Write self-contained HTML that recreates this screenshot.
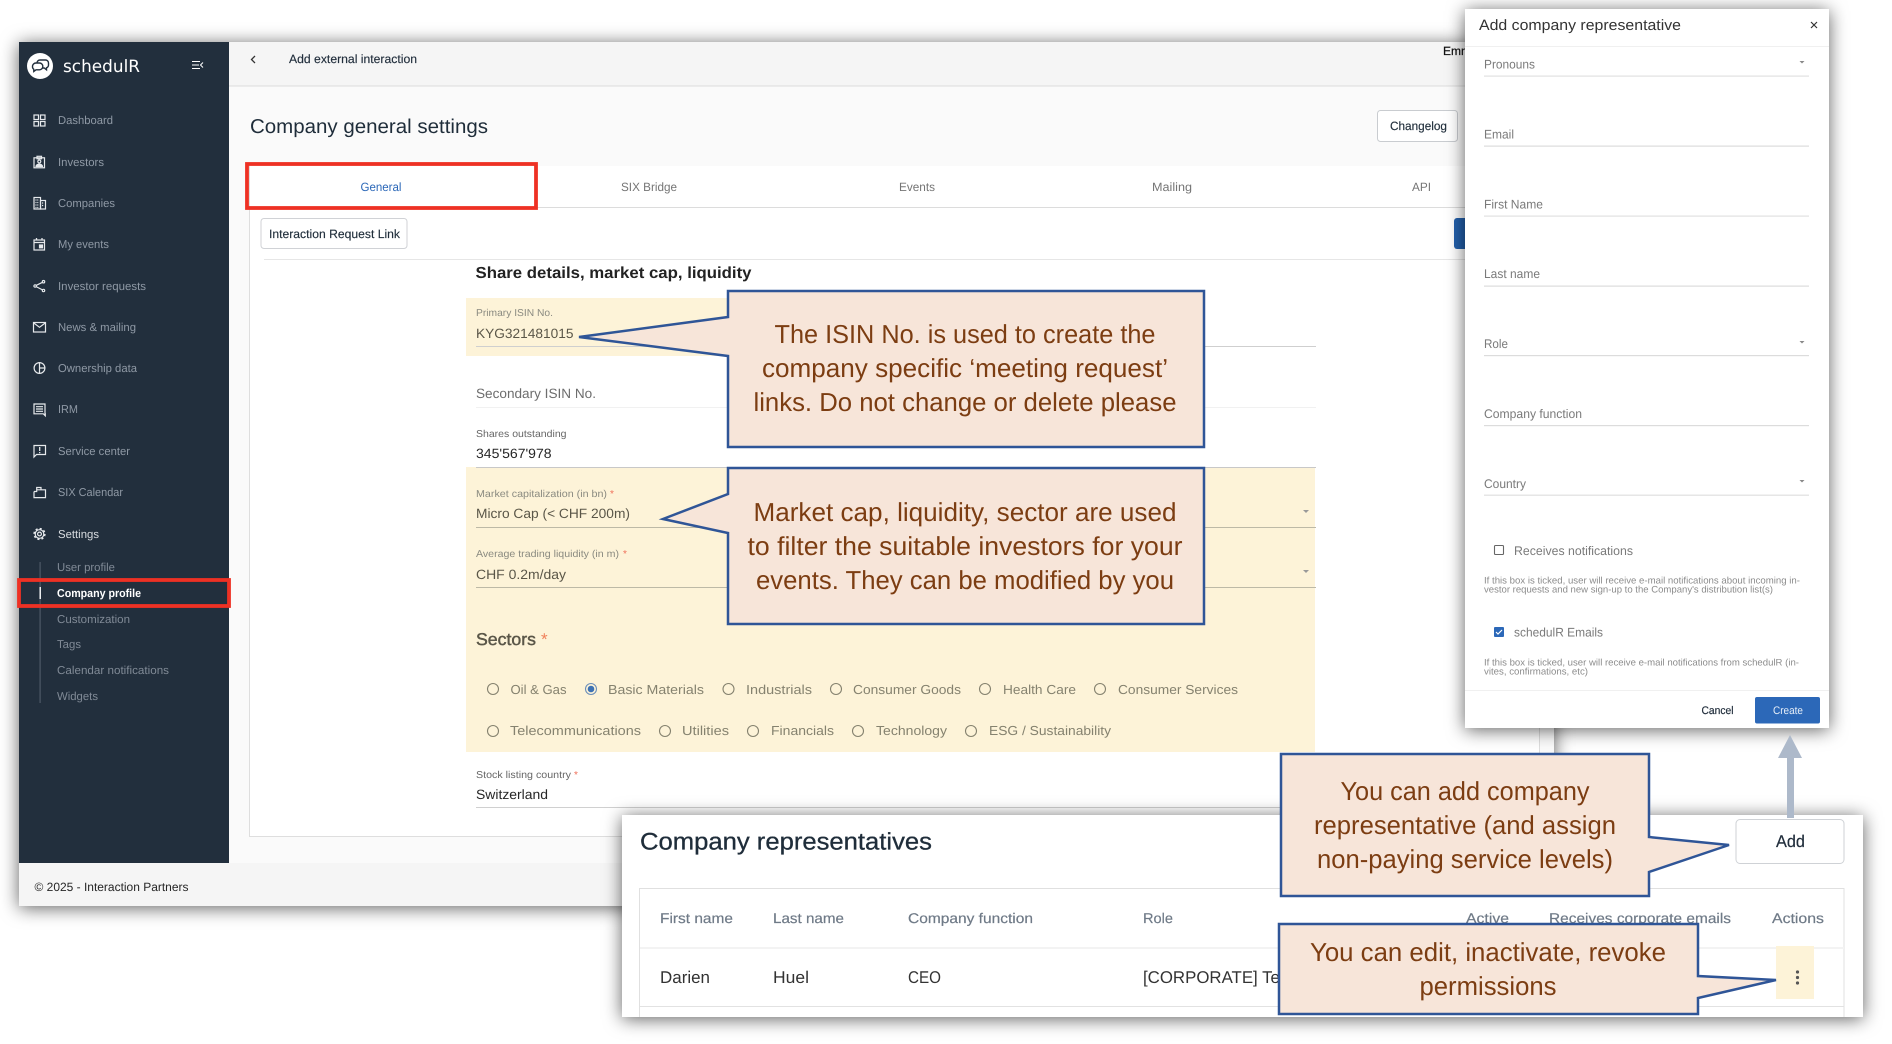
<!DOCTYPE html>
<html lang="en"><head><meta charset="utf-8"><title>Company general settings</title>
<style>
html,body{margin:0;padding:0;background:#fff;width:1892px;height:1044px;overflow:hidden}
svg{display:block;font-family:"Liberation Sans",Arial,sans-serif}
text{text-rendering:geometricPrecision}
.nav{font-size:11.5px;fill:#8f99a5}
.sub{font-size:11.5px;fill:#808a96}
.ic{fill:none;stroke:#e6e9ec;stroke-width:1.2}
.lab{font-size:12.5px;fill:#7a7a7a}
.tab{font-size:12px;fill:#757575}
.sm{font-size:10px;fill:#8a8a80}
.val{font-size:13.5px;fill:#5a5648}
.rad{font-size:13px;fill:#85826f}
.hlp{font-size:9.5px;fill:#8c8c8c}
.th{font-size:14px;fill:#6f7a87;stroke:#6f7a87;stroke-width:.2}
.td{font-size:17px;fill:#333}
.co{font-size:26px;fill:#7c3d12;text-anchor:middle}
.cb{fill:#f7e5d9;stroke:#2f5597;stroke-width:2.5}
.rc{fill:none;stroke:#85826f;stroke-width:1.1}
</style></head><body>
<svg width="1892" height="1044" viewBox="0 0 1892 1044" xmlns="http://www.w3.org/2000/svg">
<rect width="1892" height="1044" fill="#fff"/>

<!-- main window -->
<rect x="19" y="42" width="1535" height="864" fill="#fafafa" style="filter:drop-shadow(0 2px 9px rgba(0,0,0,.62))"/>
<rect x="19" y="863" width="1535" height="43" fill="#f5f5f5"/>
<rect x="229" y="42" width="1325" height="44" fill="#f5f5f5"/>
<rect x="229" y="85.5" width="1325" height="1" fill="#dcdcdc"/>

<!-- sidebar -->
<rect x="19" y="42" width="210" height="821" fill="#222f3d"/>
<circle cx="40" cy="66" r="13" fill="#fff"/>
<g fill="#fff" stroke="#222f3d" stroke-width="1.400">
<path d="M40 60h5.500a3 3 0 0 1 3 3v2a3 3 0 0 1-2 2.800v2l-2.300-1.800H40a3 3 0 0 1-3-3v-2a3 3 0 0 1 3-3z"/>
<path d="M36 63h3.500a3.300 3.300 0 0 1 3.300 3.400a3.300 3.300 0 0 1-3.300 3.400H36l-2.200 1.700v-2.200a3.400 3.400 0 0 1-1.300-2.900a3.400 3.400 0 0 1 3.500-3.400z"/>
</g>
<text x="63" y="72" font-family="DejaVu Sans,sans-serif" font-size="17" fill="#fff" textLength="77" lengthAdjust="spacingAndGlyphs">schedulR</text>
<path d="M192 61.500h8M192 65h7M192 68.500h8M203 62.500l-2.500 2.500 2.500 2.500" fill="none" stroke="#fff" stroke-width="1"/>

<g class="ic">
<g transform="translate(33.500,114.500)"><rect x=".5" y=".5" width="4.500" height="4.500"/><rect x="7" y=".5" width="4.500" height="4.500"/><rect x=".5" y="7" width="4.500" height="4.500"/><rect x="7" y="7" width="4.500" height="4.500"/></g>
<g transform="translate(33.500,156)"><rect x=".5" y="1.800" width="10.500" height="10"/><rect x="3.500" y=".3" width="4.500" height="2.500"/><circle cx="5.800" cy="5.500" r="1.500"/><path d="M2.500 10.500c0-3 6.500-3 6.500 0z" fill="#e6e9ec"/></g>
<g transform="translate(33.500,197)"><rect x=".5" y=".5" width="6.500" height="11.500"/><rect x="7" y="3.500" width="5" height="8.500"/><path d="M2 3h3.500M2 5.500h3.500M2 8h3.500M2 10.500h3.500M8.500 6h2M8.500 8.500h2" stroke-dasharray="1 .8"/></g>
<g transform="translate(33.500,238)"><rect x=".5" y="2" width="10.500" height="10"/><path d="M3 0v2M8.500 0v2M.5 4.500h10.500" stroke-width="1.300"/><rect x="6" y="7" width="3" height="2.800" fill="#e6e9ec"/></g>
<g transform="translate(33.500,280)"><circle cx="10" cy="1.700" r="1.200"/><circle cx="1.600" cy="6" r="1.200"/><circle cx="10" cy="10.500" r="1.200"/><path d="M9 2.300L2.600 5.400M2.600 6.600L9 9.900" stroke-width="1.200"/></g>
<g transform="translate(33,321)"><rect x=".5" y="1.500" width="12" height="9.500"/><path d="M.8 2l5.700 4.300L12.200 2"/></g>
<g transform="translate(33.500,362)"><circle cx="6" cy="6" r="5.400"/><path d="M6 .6v10.800M6 6h5.400"/></g>
<g transform="translate(33.500,403.500)"><path d="M.5.500h11v9.800h.3v2l-2-2H.5z"/><path d="M2.500 3.200h7M2.500 5.500h7M2.500 7.800h7"/></g>
<g transform="translate(33.500,445)"><path d="M.5.500h11.500v9H3L.5 12z"/><path d="M6.200 2v4M6.200 7v1.300" stroke-width="1.300"/></g>
<g transform="translate(33.500,486)"><path d="M.5 5.500h2.700V1.500H7.500V3.800H3.200M3.200 3.800v1.700M3.200 3.800H12v7.800H.5V5.500"/></g>
<g transform="translate(39.500,534)"><circle r="1.900"/><circle r="4.300"/><circle r="5.400" stroke-width="1.500" stroke-dasharray="2.100 2.140"/></g>
</g>

<text class="nav" x="58" y="124" textLength="55" lengthAdjust="spacingAndGlyphs">Dashboard</text>
<text class="nav" x="58" y="166" textLength="46" lengthAdjust="spacingAndGlyphs">Investors</text>
<text class="nav" x="58" y="207" textLength="57" lengthAdjust="spacingAndGlyphs">Companies</text>
<text class="nav" x="58" y="248" textLength="51" lengthAdjust="spacingAndGlyphs">My events</text>
<text class="nav" x="58" y="290" textLength="88" lengthAdjust="spacingAndGlyphs">Investor requests</text>
<text class="nav" x="58" y="331" textLength="78" lengthAdjust="spacingAndGlyphs">News &amp; mailing</text>
<text class="nav" x="58" y="372" textLength="79" lengthAdjust="spacingAndGlyphs">Ownership data</text>
<text class="nav" x="58" y="413" textLength="20" lengthAdjust="spacingAndGlyphs">IRM</text>
<text class="nav" x="58" y="455" textLength="72" lengthAdjust="spacingAndGlyphs">Service center</text>
<text class="nav" x="58" y="496" textLength="65" lengthAdjust="spacingAndGlyphs">SIX Calendar</text>
<text class="nav" x="58" y="538" textLength="41" lengthAdjust="spacingAndGlyphs" style="fill:#d8dce0">Settings</text>

<rect x="39.500" y="562" width="1.200" height="141" fill="#4d5866"/>
<rect x="39.500" y="587" width="1.400" height="12" fill="#fff"/>
<text class="sub" x="57" y="571" textLength="58" lengthAdjust="spacingAndGlyphs">User profile</text>
<text x="57" y="597" font-size="11.500" font-weight="700" fill="#fff" textLength="84" lengthAdjust="spacingAndGlyphs">Company profile</text>
<text class="sub" x="57" y="623" textLength="73" lengthAdjust="spacingAndGlyphs">Customization</text>
<text class="sub" x="57" y="648" textLength="24" lengthAdjust="spacingAndGlyphs">Tags</text>
<text class="sub" x="57" y="674" textLength="112" lengthAdjust="spacingAndGlyphs">Calendar notifications</text>
<text class="sub" x="57" y="700" textLength="41" lengthAdjust="spacingAndGlyphs">Widgets</text>
<rect x="19" y="580" width="210" height="26" fill="none" stroke="#ee3124" stroke-width="3.800"/>

<text x="34.500" y="891" font-size="12" fill="#262626" textLength="154" lengthAdjust="spacingAndGlyphs">© 2025 - Interaction Partners</text>

<!-- top bar -->
<path d="M255 56l-3.500 3.500 3.500 3.500" fill="none" stroke="#333" stroke-width="1.300"/>
<text x="289" y="63" font-size="12" fill="#222f3d" stroke="#222f3d" stroke-width=".15" textLength="128" lengthAdjust="spacingAndGlyphs">Add external interaction</text>
<text x="1443" y="55" font-size="12" fill="#111" stroke="#111" stroke-width=".2">Emma</text>

<!-- page heading -->
<text x="250" y="133" font-size="20" fill="#1f2d3a" textLength="238" lengthAdjust="spacingAndGlyphs">Company general settings</text>
<rect x="1377.500" y="110.500" width="80" height="31" rx="3" fill="#fff" stroke="#c9ccd0"/>
<text x="1390" y="130" font-size="12" fill="#1f2d3a" stroke="#1f2d3a" stroke-width=".15" textLength="57" lengthAdjust="spacingAndGlyphs">Changelog</text>

<!-- card -->
<rect x="249" y="166" width="1291" height="671" fill="#fff"/>
<path d="M249.500 166V836.500H1539.500V166" fill="none" stroke="#dedede"/>
<rect x="249" y="207" width="1291" height="1" fill="#dcdcdc"/>
<text x="360.500" y="191" font-size="12" fill="#2c68b8" textLength="41" lengthAdjust="spacingAndGlyphs">General</text>
<text class="tab" x="621" y="191" textLength="56" lengthAdjust="spacingAndGlyphs">SIX Bridge</text>
<text class="tab" x="899" y="191" textLength="36" lengthAdjust="spacingAndGlyphs">Events</text>
<text class="tab" x="1152" y="191" textLength="40" lengthAdjust="spacingAndGlyphs">Mailing</text>
<text class="tab" x="1412" y="191" textLength="19" lengthAdjust="spacingAndGlyphs">API</text>
<rect x="247" y="164" width="289" height="44" fill="none" stroke="#ee3124" stroke-width="3.800"/>

<rect x="261" y="218.500" width="146" height="30" rx="3" fill="#fff" stroke="#d0d2d6"/>
<text x="269" y="238" font-size="12" fill="#1f2d3a" stroke="#1f2d3a" stroke-width=".15" textLength="131" lengthAdjust="spacingAndGlyphs">Interaction Request Link</text>
<rect x="1454" y="218" width="40" height="31" rx="3" fill="#2360ac"/>
<rect x="264" y="259" width="1276" height="1" fill="#e6e6e6"/>

<text x="475.500" y="278" font-size="16" font-weight="700" fill="#222" textLength="276" lengthAdjust="spacingAndGlyphs">Share details, market cap, liquidity</text>

<!-- highlights -->
<rect x="466" y="298" width="270" height="58" fill="#fdf3d8"/>
<rect x="466" y="467" width="849" height="285" fill="#fdf3d8"/>

<!-- form -->
<text class="sm" x="476" y="316" textLength="77" lengthAdjust="spacingAndGlyphs">Primary ISIN No.</text>
<text class="val" x="476" y="338" textLength="97.500" lengthAdjust="spacingAndGlyphs">KYG321481015</text>
<rect x="476" y="346" width="840" height="1" fill="#cfcfcf"/>
<text x="476" y="398" font-size="13.500" fill="#6d6d6d" textLength="120" lengthAdjust="spacingAndGlyphs">Secondary ISIN No.</text>
<rect x="476" y="407" width="840" height="1" fill="#f1f1f1"/>
<text x="476" y="437" font-size="10" fill="#666" textLength="90.500" lengthAdjust="spacingAndGlyphs">Shares outstanding</text>
<text x="476" y="458" font-size="13.500" fill="#262626" textLength="75.600" lengthAdjust="spacingAndGlyphs">345'567'978</text>
<rect x="476" y="467" width="840" height="1" fill="#c8c8c8"/>
<text class="sm" x="476" y="497" textLength="131" lengthAdjust="spacingAndGlyphs">Market capitalization (in bn)</text>
<text x="610" y="497" font-size="10" fill="#f0705a">*</text>
<text class="val" x="476" y="518" textLength="154" lengthAdjust="spacingAndGlyphs">Micro Cap (&lt; CHF 200m)</text>
<rect x="476" y="527" width="840" height="1" fill="#bdb9a6"/>
<path d="M1308 511h6l-3 3z" fill="#999" transform="translate(-5,-1)"/>
<text class="sm" x="476" y="557" textLength="143" lengthAdjust="spacingAndGlyphs">Average trading liquidity (in m)</text>
<text x="623" y="557" font-size="10" fill="#f0705a">*</text>
<text class="val" x="476" y="579" textLength="90" lengthAdjust="spacingAndGlyphs">CHF 0.2m/day</text>
<rect x="476" y="587" width="840" height="1" fill="#bdb9a6"/>
<path d="M1308 571h6l-3 3z" fill="#999" transform="translate(-5,-1)"/>
<text x="476" y="645" font-size="17" fill="#5a5648" stroke="#5a5648" stroke-width=".45" textLength="60" lengthAdjust="spacingAndGlyphs">Sectors</text>
<text x="541" y="645" font-size="17" fill="#f0805a">*</text>

<g>
<circle class="rc" cx="493" cy="689" r="5.500"/><text class="rad" x="510.500" y="694" textLength="56" lengthAdjust="spacingAndGlyphs">Oil &amp; Gas</text>
<circle cx="591" cy="689" r="5.500" fill="none" stroke="#6d8fb8" stroke-width="1.100"/><circle cx="591" cy="689" r="3.300" fill="#3d72b4"/><text class="rad" x="608" y="694" textLength="96" lengthAdjust="spacingAndGlyphs">Basic Materials</text>
<circle class="rc" cx="728.500" cy="689" r="5.500"/><text class="rad" x="746" y="694" textLength="66" lengthAdjust="spacingAndGlyphs">Industrials</text>
<circle class="rc" cx="836" cy="689" r="5.500"/><text class="rad" x="853" y="694" textLength="108" lengthAdjust="spacingAndGlyphs">Consumer Goods</text>
<circle class="rc" cx="985" cy="689" r="5.500"/><text class="rad" x="1003" y="694" textLength="73" lengthAdjust="spacingAndGlyphs">Health Care</text>
<circle class="rc" cx="1100" cy="689" r="5.500"/><text class="rad" x="1118" y="694" textLength="120" lengthAdjust="spacingAndGlyphs">Consumer Services</text>
<circle class="rc" cx="493" cy="731" r="5.500"/><text class="rad" x="510" y="735" textLength="131" lengthAdjust="spacingAndGlyphs">Telecommunications</text>
<circle class="rc" cx="665" cy="731" r="5.500"/><text class="rad" x="682" y="735" textLength="47" lengthAdjust="spacingAndGlyphs">Utilities</text>
<circle class="rc" cx="753" cy="731" r="5.500"/><text class="rad" x="771" y="735" textLength="63" lengthAdjust="spacingAndGlyphs">Financials</text>
<circle class="rc" cx="858" cy="731" r="5.500"/><text class="rad" x="876" y="735" textLength="71" lengthAdjust="spacingAndGlyphs">Technology</text>
<circle class="rc" cx="971" cy="731" r="5.500"/><text class="rad" x="989" y="735" textLength="122" lengthAdjust="spacingAndGlyphs">ESG / Sustainability</text>
</g>
<text x="476" y="778" font-size="10" fill="#666" textLength="95" lengthAdjust="spacingAndGlyphs">Stock listing country</text>
<text x="574" y="778" font-size="10" fill="#f0705a">*</text>
<text x="476" y="799" font-size="13.500" fill="#262626" textLength="72" lengthAdjust="spacingAndGlyphs">Switzerland</text>
<rect x="476" y="807" width="840" height="1" fill="#d0d0d0"/>

<!-- modal -->
<rect x="1465" y="9" width="364" height="719" fill="#fff" style="filter:drop-shadow(0 2px 9px rgba(0,0,0,.62))"/>
<text x="1479" y="30" font-size="15" fill="#333" textLength="202" lengthAdjust="spacingAndGlyphs">Add company representative</text>
<path d="M1811 22l6 6M1817 22l-6 6" stroke="#333" stroke-width="1.200"/>
<rect x="1465" y="46" width="364" height="1" fill="#f0f0f0"/>

<text class="lab" x="1484" y="68.500" textLength="51" lengthAdjust="spacingAndGlyphs">Pronouns</text>
<rect x="1484" y="75.500" width="325" height="1.200" fill="#e2e2e2"/>
<path d="M1799.500 61h5l-2.500 2.500z" fill="#888"/>
<text class="lab" x="1484" y="138.500" textLength="30" lengthAdjust="spacingAndGlyphs">Email</text>
<rect x="1484" y="145.500" width="325" height="1.200" fill="#dcdcdc"/>
<text class="lab" x="1484" y="208.500" textLength="59" lengthAdjust="spacingAndGlyphs">First Name</text>
<rect x="1484" y="215.500" width="325" height="1.200" fill="#e2e2e2"/>
<text class="lab" x="1484" y="278" textLength="56" lengthAdjust="spacingAndGlyphs">Last name</text>
<rect x="1484" y="285.500" width="325" height="1.200" fill="#dcdcdc"/>
<text class="lab" x="1484" y="348" textLength="24" lengthAdjust="spacingAndGlyphs">Role</text>
<rect x="1484" y="355" width="325" height="1.200" fill="#dcdcdc"/>
<path d="M1799.500 341h5l-2.500 2.500z" fill="#888"/>
<text class="lab" x="1484" y="418" textLength="98" lengthAdjust="spacingAndGlyphs">Company function</text>
<rect x="1484" y="425" width="325" height="1.200" fill="#dcdcdc"/>
<text class="lab" x="1484" y="488" textLength="42" lengthAdjust="spacingAndGlyphs">Country</text>
<rect x="1484" y="494.500" width="325" height="1.500" fill="#e6e6e6"/>
<path d="M1799.500 480h5l-2.500 2.500z" fill="#888"/>

<rect x="1494.500" y="545.500" width="9" height="9" rx="1" fill="none" stroke="#666" stroke-width="1.100"/>
<text class="lab" x="1514" y="555" textLength="119" lengthAdjust="spacingAndGlyphs">Receives notifications</text>
<text class="hlp" x="1484" y="583.500" textLength="316" lengthAdjust="spacingAndGlyphs">If this box is ticked, user will receive e-mail notifications about incoming in-</text>
<text class="hlp" x="1484" y="592.500" textLength="289" lengthAdjust="spacingAndGlyphs">vestor requests and new sign-up to the Company's distribution list(s)</text>
<rect x="1494" y="627" width="10" height="10" rx="1" fill="#2c68b8"/>
<path d="M1496 632l2 2 4-4" fill="none" stroke="#fff" stroke-width="1.200"/>
<text class="lab" x="1514" y="636.500" textLength="89" lengthAdjust="spacingAndGlyphs">schedulR Emails</text>
<text class="hlp" x="1484" y="665.500" textLength="315" lengthAdjust="spacingAndGlyphs">If this box is ticked, user will receive e-mail notifications from schedulR (in-</text>
<text class="hlp" x="1484" y="674.500" textLength="104" lengthAdjust="spacingAndGlyphs">vites, confirmations, etc)</text>
<rect x="1465" y="690" width="364" height="1" fill="#f0f0f0"/>
<text x="1701.500" y="714" font-size="11" fill="#222f3d" stroke="#222f3d" stroke-width=".2" textLength="32" lengthAdjust="spacingAndGlyphs">Cancel</text>
<rect x="1755" y="697" width="65" height="26.500" rx="2" fill="#2c68b8"/>
<text x="1773" y="714" font-size="11" fill="#e8eff8" textLength="30" lengthAdjust="spacingAndGlyphs">Create</text>

<!-- bottom panel -->
<rect x="622" y="815" width="1241" height="202" fill="#fff" style="filter:drop-shadow(0 2px 9px rgba(0,0,0,.62))"/>
<text x="640" y="849.500" font-size="24" fill="#1f2d3a" stroke="#1f2d3a" stroke-width=".3" textLength="292" lengthAdjust="spacingAndGlyphs">Company representatives</text>
<path d="M639.500 1017V888.500H1844V1017" fill="none" stroke="#e0e0e0"/>
<rect x="640" y="947" width="1204" height="2" fill="#f3f3f3"/>
<rect x="640" y="1006" width="1204" height="1" fill="#e2e2e2"/>
<text class="th" x="660" y="923" textLength="73" lengthAdjust="spacingAndGlyphs">First name</text>
<text class="th" x="773" y="923" textLength="71" lengthAdjust="spacingAndGlyphs">Last name</text>
<text class="th" x="908" y="923" textLength="125" lengthAdjust="spacingAndGlyphs">Company function</text>
<text class="th" x="1143" y="923" textLength="30" lengthAdjust="spacingAndGlyphs">Role</text>
<text class="th" x="1466" y="923" textLength="43" lengthAdjust="spacingAndGlyphs">Active</text>
<text class="th" x="1549" y="923" textLength="182" lengthAdjust="spacingAndGlyphs">Receives corporate emails</text>
<text class="th" x="1772" y="923" textLength="52" lengthAdjust="spacingAndGlyphs">Actions</text>
<text class="td" x="660" y="983" textLength="50" lengthAdjust="spacingAndGlyphs">Darien</text>
<text class="td" x="773" y="983" textLength="36" lengthAdjust="spacingAndGlyphs">Huel</text>
<text class="td" x="908" y="983" textLength="33" lengthAdjust="spacingAndGlyphs">CEO</text>
<text class="td" x="1143" y="983" textLength="150" lengthAdjust="spacingAndGlyphs">[CORPORATE] Test</text>
<rect x="1776" y="946" width="38" height="53" fill="#fdf3d8"/>
<circle cx="1797.500" cy="972" r="1.600" fill="#555"/><circle cx="1797.500" cy="977.500" r="1.600" fill="#555"/><circle cx="1797.500" cy="983" r="1.600" fill="#555"/>
<rect x="1736" y="819.500" width="108" height="44" rx="4" fill="#fff" stroke="#cfd2d6"/>
<text x="1776" y="847" font-size="17" fill="#222f3d" stroke="#222f3d" stroke-width=".2" textLength="29" lengthAdjust="spacingAndGlyphs">Add</text>

<!-- arrow -->
<polygon points="1790,735 1802,758 1794,758 1794,818 1787,818 1787,758 1778,758" fill="#adb9ca"/>

<!-- callouts -->
<path class="cb" d="M728 291H1204V447H728V356L579 337 728 317Z"/>
<text class="co" x="965" y="343" textLength="381" lengthAdjust="spacingAndGlyphs">The ISIN No. is used to create the</text>
<text class="co" x="965" y="377" textLength="406" lengthAdjust="spacingAndGlyphs">company specific ‘meeting request’</text>
<text class="co" x="965" y="411" textLength="423" lengthAdjust="spacingAndGlyphs">links. Do not change or delete please</text>

<path class="cb" d="M728 468H1204V624H728V533L663 519 728 494Z"/>
<text class="co" x="965" y="521" textLength="423" lengthAdjust="spacingAndGlyphs">Market cap, liquidity, sector are used</text>
<text class="co" x="965" y="555" textLength="435" lengthAdjust="spacingAndGlyphs">to filter the suitable investors for your</text>
<text class="co" x="965" y="589" textLength="418" lengthAdjust="spacingAndGlyphs">events. They can be modified by you</text>

<path class="cb" d="M1281 754H1649V837L1729 845 1649 872V896H1281Z"/>
<text class="co" x="1465" y="800" textLength="249" lengthAdjust="spacingAndGlyphs">You can add company</text>
<text class="co" x="1465" y="834" textLength="302" lengthAdjust="spacingAndGlyphs">representative (and assign</text>
<text class="co" x="1465" y="868" textLength="296" lengthAdjust="spacingAndGlyphs">non-paying service levels)</text>

<path class="cb" d="M1279 924H1698V976L1776 980 1698 998V1014H1279Z"/>
<text class="co" x="1488" y="961" textLength="356" lengthAdjust="spacingAndGlyphs">You can edit, inactivate, revoke</text>
<text class="co" x="1488" y="995" textLength="137" lengthAdjust="spacingAndGlyphs">permissions</text>
</svg>
</body></html>
